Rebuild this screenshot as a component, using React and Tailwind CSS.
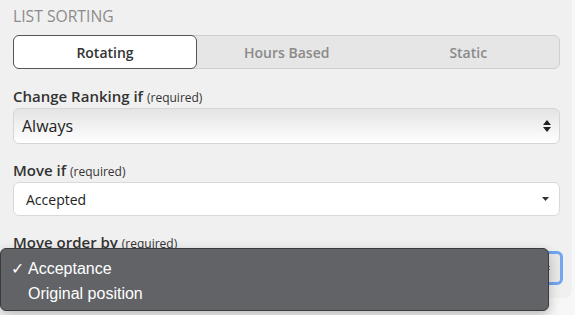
import React from "react";

const font = { fontFamily: '"Open Sans", sans-serif' };

const UpDown = ({ className = "" }) => (
  <svg width="8" height="12" viewBox="0 0 8 12" className={className}>
    <path d="M4 0 L8 5 L0 5 Z" fill="#222" />
    <path d="M0 7 L8 7 L4 12 Z" fill="#222" />
  </svg>
);

const Label = ({ children, className = "" }) => (
  <div className={"text-[15px] font-semibold text-[#333] " + className}>
    {children} <span className="text-[12px] font-normal leading-none">(required)</span>
  </div>
);

export default function App() {
  return (
    <div className="w-[575px] h-[315px] bg-[#f7f7f7] overflow-hidden relative" style={font}>
      <div className="w-[572px] h-[298px] bg-[#f0f0f0] rounded-br-lg pl-[13px] pr-[12px] flex flex-col">
        {/* Title */}
        <div className="pt-[6px] text-[15.7px] leading-[20px] text-[#8c8c8c] uppercase">List Sorting</div>

        {/* Segmented control */}
        <div className="mt-[9px] h-[34px] flex rounded-[6px] border border-[#cfcfcf] bg-[#e6e6e6] text-[14px] font-semibold">
          <div className="w-[184px] -m-px flex items-center justify-center bg-white border border-[#555] rounded-[6px] text-[#333]">
            Rotating
          </div>
          <div className="flex-1 flex items-center justify-center text-[#8a8a8a]">Hours Based</div>
          <div className="flex-1 flex items-center justify-center text-[#8a8a8a]">Static</div>
        </div>

        {/* Change ranking */}
        <Label className="mt-[17px] h-[20px] leading-[20px]">Change Ranking if</Label>
        <div className="mt-[2px] h-[36px] flex items-center justify-between pl-[8px] pr-[8px] rounded-[6px] border border-[#d6d6d6] bg-gradient-to-b from-[#e4e4e4] to-white text-[16px] text-[#222]">
          <span>Always</span>
          <UpDown />
        </div>

        {/* Move if */}
        <Label className="mt-[16px] h-[20px] leading-[20px]">Move if</Label>
        <div className="mt-[2px] h-[34px] flex items-center justify-between pl-[12px] pr-[10px] rounded-[6px] border border-[#d9d9d9] bg-white text-[14px] text-[#222]">
          <span>Accepted</span>
          <svg width="7" height="4" viewBox="0 0 7 4">
            <path d="M0 0 L7 0 L3.5 4 Z" fill="#333" />
          </svg>
        </div>

        {/* Move order by */}
        <Label className="mt-[17px] h-[18px] leading-[18px]">Move order by</Label>
        <div className="mt-[0px] h-[34px] mr-[-3px] flex items-center justify-end pr-[10px] rounded-[6px] border-[3px] border-[#72a6f2] bg-[#e9e9e9]">
          <UpDown />
        </div>
      </div>

      {/* Open native dropdown menu */}
      <div
        className="absolute left-0 top-[248px] w-[549px] h-[63px] rounded-[6px] border border-[#3a3a3c] bg-[#626367] shadow-[0_4px_12px_rgba(0,0,0,0.25)] pt-[8px] text-[16px] text-white"
        style={{ fontFamily: '"Liberation Sans", Arial, sans-serif' }}
      >
        <div className="h-[24px] flex items-center pl-[10px]">
          <span className="w-[17px]">✓</span>
          <span>Acceptance</span>
        </div>
        <div className="h-[25px] flex items-center pl-[27px]">Original position</div>
      </div>
    </div>
  );
}
